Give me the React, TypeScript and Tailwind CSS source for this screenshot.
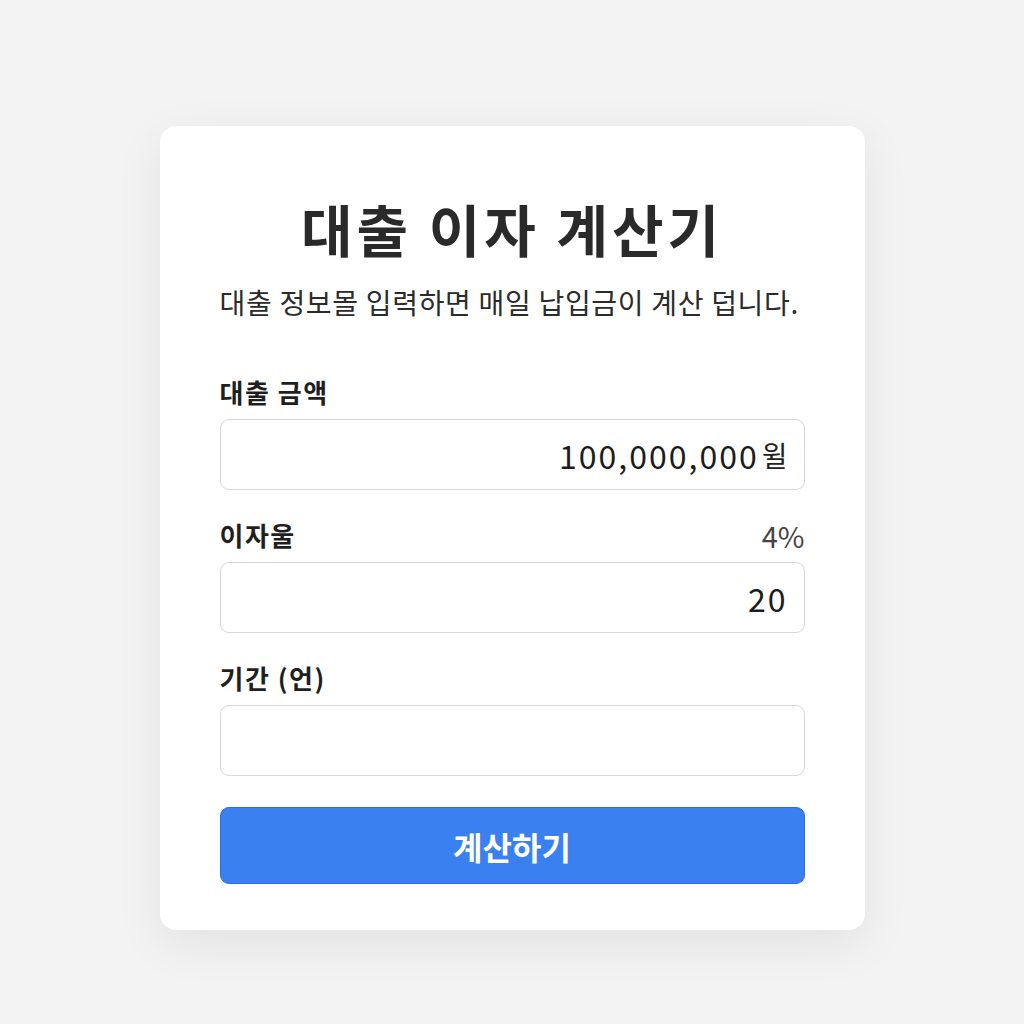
import { useState } from 'react';

const font = { fontFamily: '"Noto Sans CJK KR", "Noto Sans", sans-serif' };

function Field({
  label,
  aside,
  value,
  unit,
}: {
  label: string;
  aside?: string;
  value?: string;
  unit?: string;
}) {
  return (
    <div className="flex flex-col">
      <div className="flex items-end justify-between h-[30px]">
        <span className="text-[26px] leading-[30px] font-bold text-[#1f1f1f] tracking-[1.5px]">{label}</span>
        {aside && <span className="text-[29px] leading-[30px] text-[#444]">{aside}</span>}
      </div>
      <div className="mt-[12px] h-[71px] rounded-[9px] border border-[#d6d6d6] bg-white flex items-center justify-end pr-[16px]">
        {value && <span className="text-[32px] text-[#1c1c1c] tracking-[2px]">{value}</span>}
        {unit && <span className="ml-[3px] text-[28px] text-[#222]">{unit}</span>}
      </div>
    </div>
  );
}

export default function App() {
  const [amount] = useState('100,000,000');
  const [rate] = useState('20');

  return (
    <div className="min-h-screen bg-[#f3f3f3] flex justify-center pt-[126px]" style={font}>
      <div className="w-[705px] h-[804px] bg-white rounded-[16px] shadow-[0_14px_50px_rgba(0,0,0,0.07)] px-[60px] pt-[73px]">
        <h1 className="text-center text-[56px] leading-[58px] font-bold text-[#2a2a2a] tracking-[4px]">
          대출 이자 계산기
        </h1>
        <p className="mt-[28px] text-[28px] leading-[34px] text-[#2b2b2b] tracking-[0.7px] whitespace-nowrap">
          대출 정보몰 입력하면 매일 납입금이 계산 덥니다.
        </p>

        <div className="mt-[58px] flex flex-col gap-[30px]">
          <Field label="대출 금액" value={amount} unit="윌" />
          <Field label="이자울" aside="4%" value={rate} />
          <Field label="기간 (언)" />
        </div>

        <button className="mt-[31px] w-full h-[77px] rounded-[9px] bg-[#3b80f0] border border-[#2a6de6] text-white text-[32px] font-semibold">
          계산하기
        </button>
      </div>
    </div>
  );
}
